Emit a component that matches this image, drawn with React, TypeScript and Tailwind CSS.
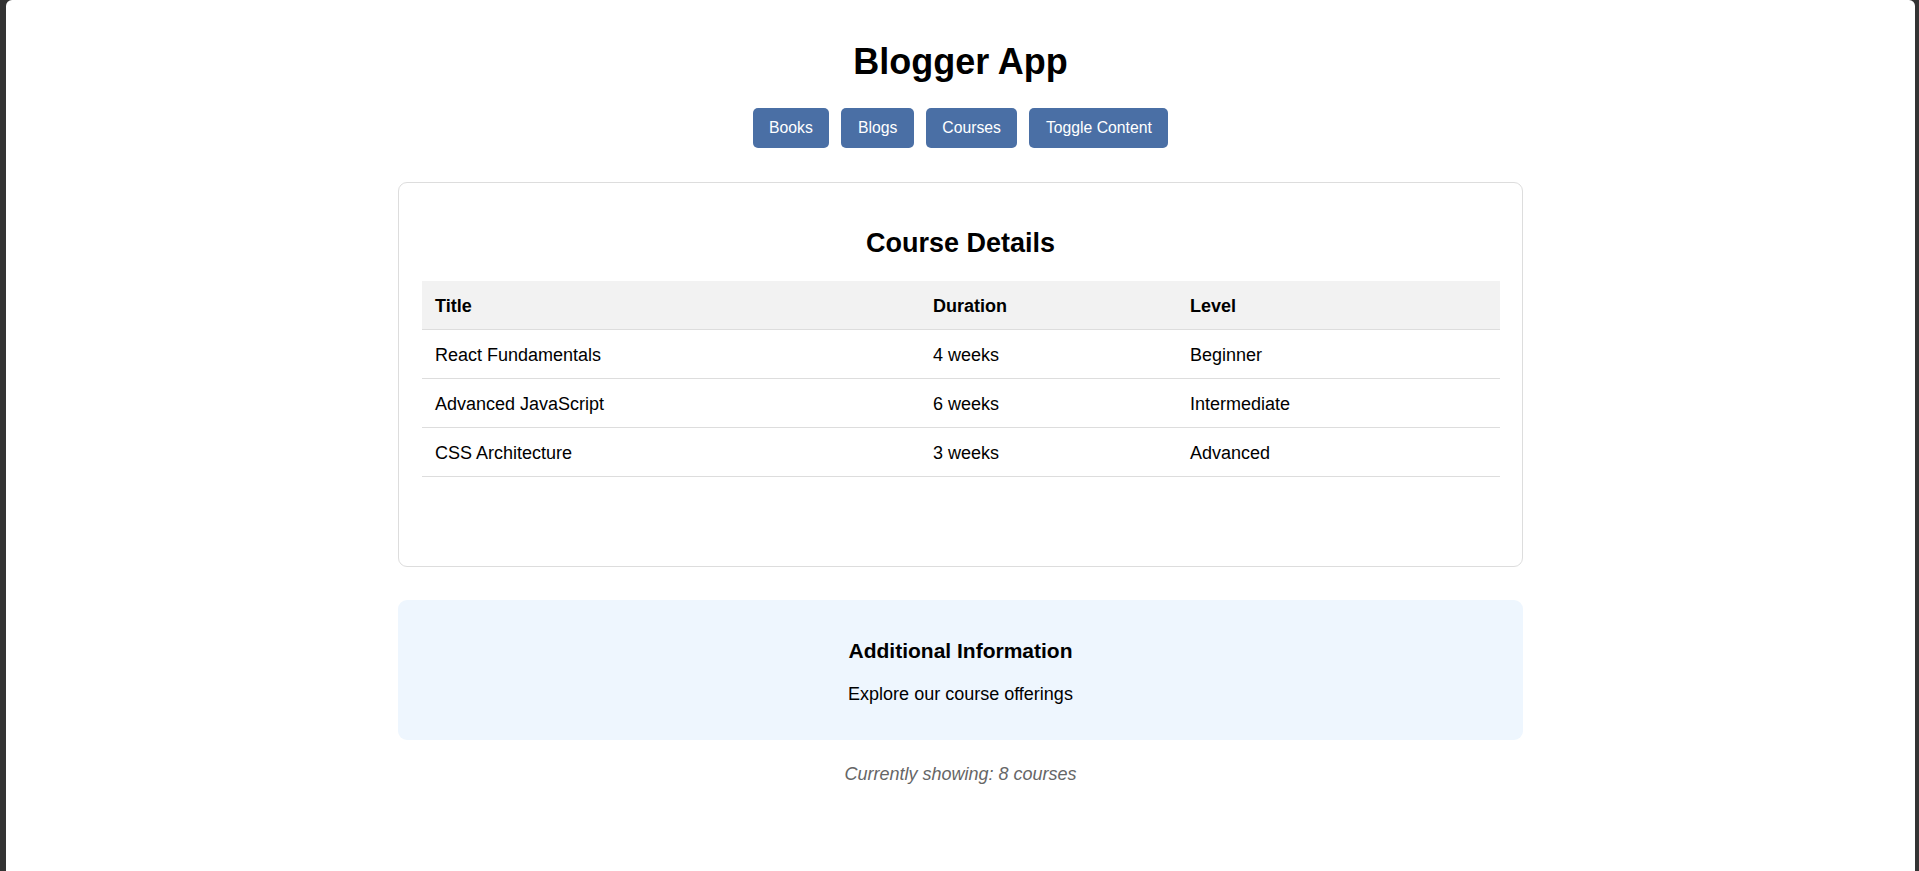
import React from "react";

const courses = [
  { title: "React Fundamentals", duration: "4 weeks", level: "Beginner" },
  { title: "Advanced JavaScript", duration: "6 weeks", level: "Intermediate" },
  { title: "CSS Architecture", duration: "3 weeks", level: "Advanced" },
];

const buttons = ["Books", "Blogs", "Courses", "Toggle Content"];

export default function App() {
  return (
    <div className="h-[871px] bg-[#333333] pl-[6px] pr-[4px] font-['Liberation_Sans',Arial,sans-serif] text-black">
      <div className="h-full bg-white rounded-t-[6px] pt-[41px] flex flex-col items-center">
        <h1 className="text-[36px] font-bold leading-[41px]">Blogger App</h1>
        <nav className="mt-[26px] flex gap-[12px]">
          {buttons.map((b) => (
            <button
              key={b}
              className="h-[40px] px-[16.5px] rounded-[5px] bg-[#4a6fa5] text-white text-[15.75px] leading-[18px]"
            >
              {b}
            </button>
          ))}
        </nav>
        <div className="mt-[34px] w-[1125px] border border-[#dddddd] rounded-[9px] px-[22.5px] pt-[22.5px] pb-[22.5px]">
          <h2 className="mt-[22px] mb-[22px] text-center text-[27px] font-bold leading-[31px]">
            Course Details
          </h2>
          <table className="w-full border-collapse text-[18px] leading-[21px] mb-[67px]">
            <thead>
              <tr className="bg-[#f2f2f2] border-b border-[#dddddd]">
                <th className="w-[498px] text-left font-bold px-[13.5px] pt-[15.5px] pb-[11.5px]">Title</th>
                <th className="w-[257px] text-left font-bold px-[13.5px] pt-[15.5px] pb-[11.5px]">Duration</th>
                <th className="text-left font-bold px-[13.5px] pt-[15.5px] pb-[11.5px]">Level</th>
              </tr>
            </thead>
            <tbody>
              {courses.map((c) => (
                <tr key={c.title} className="border-b border-[#dddddd]">
                  <td className="px-[13.5px] pt-[15.5px] pb-[11.5px]">{c.title}</td>
                  <td className="px-[13.5px] pt-[15.5px] pb-[11.5px]">{c.duration}</td>
                  <td className="px-[13.5px] pt-[15.5px] pb-[11.5px]">{c.level}</td>
                </tr>
              ))}
            </tbody>
          </table>
        </div>
        <div className="mt-[33px] w-[1125px] bg-[#eef6fe] rounded-[9px] pt-[17px] pb-[18px] text-center">
          <h3 className="mt-[22px] text-[21px] font-bold leading-[24px]">Additional Information</h3>
          <p className="mt-[21px] mb-[17px] text-[18px] leading-[21px]">Explore our course offerings</p>
        </div>
        <p className="mt-[24px] italic text-[#666666] text-[18px] leading-[21px]">
          Currently showing: 8 courses
        </p>
      </div>
    </div>
  );
}
